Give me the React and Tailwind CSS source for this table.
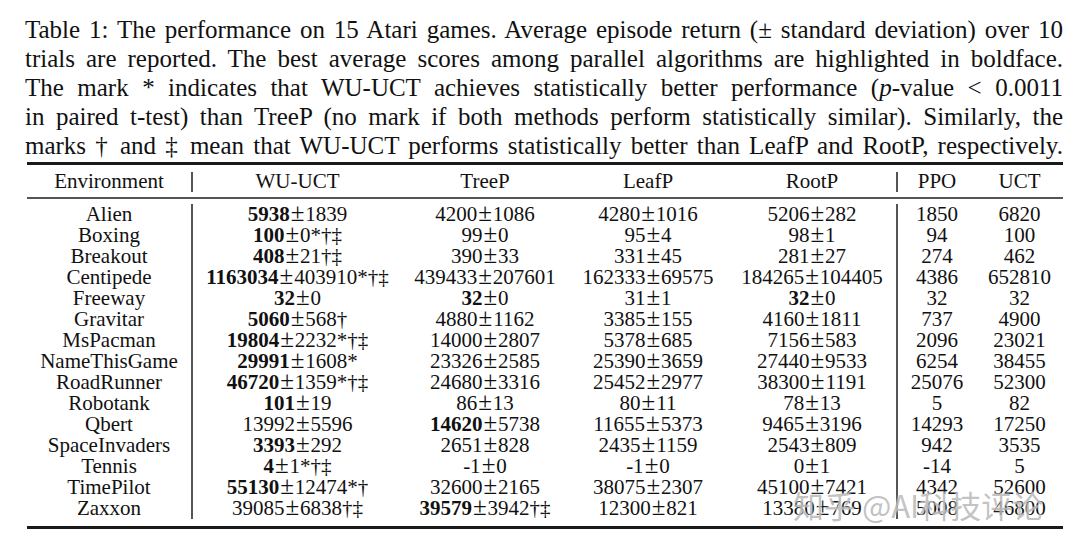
import React from "react";

const rows = [
  ["Alien", [["5938", "±1839"], ["", "4200±1086"], ["", "4280±1016"], ["", "5206±282"]], "1850", "6820"],
  ["Boxing", [["100", "±0*†‡"], ["", "99±0"], ["", "95±4"], ["", "98±1"]], "94", "100"],
  ["Breakout", [["408", "±21†‡"], ["", "390±33"], ["", "331±45"], ["", "281±27"]], "274", "462"],
  ["Centipede", [["1163034", "±403910*†‡"], ["", "439433±207601"], ["", "162333±69575"], ["", "184265±104405"]], "4386", "652810"],
  ["Freeway", [["32", "±0"], ["32", "±0"], ["", "31±1"], ["32", "±0"]], "32", "32"],
  ["Gravitar", [["5060", "±568†"], ["", "4880±1162"], ["", "3385±155"], ["", "4160±1811"]], "737", "4900"],
  ["MsPacman", [["19804", "±2232*†‡"], ["", "14000±2807"], ["", "5378±685"], ["", "7156±583"]], "2096", "23021"],
  ["NameThisGame", [["29991", "±1608*"], ["", "23326±2585"], ["", "25390±3659"], ["", "27440±9533"]], "6254", "38455"],
  ["RoadRunner", [["46720", "±1359*†‡"], ["", "24680±3316"], ["", "25452±2977"], ["", "38300±1191"]], "25076", "52300"],
  ["Robotank", [["101", "±19"], ["", "86±13"], ["", "80±11"], ["", "78±13"]], "5", "82"],
  ["Qbert", [["", "13992±5596"], ["14620", "±5738"], ["", "11655±5373"], ["", "9465±3196"]], "14293", "17250"],
  ["SpaceInvaders", [["3393", "±292"], ["", "2651±828"], ["", "2435±1159"], ["", "2543±809"]], "942", "3535"],
  ["Tennis", [["4", "±1*†‡"], ["", "-1±0"], ["", "-1±0"], ["", "0±1"]], "-14", "5"],
  ["TimePilot", [["55130", "±12474*†"], ["", "32600±2165"], ["", "38075±2307"], ["", "45100±7421"]], "4342", "52600"],
  ["Zaxxon", [["", "39085±6838†‡"], ["39579", "±3942†‡"], ["", "12300±821"], ["", "13380±769"]], "5008", "46800"],
];

function Pm() {
  return <span className="text-[25px] leading-[0] mx-[1px]">±</span>;
}

function Val({ bold, rest }) {
  const [a, b] = rest.split("±");
  return (
    <span>
      {bold && <b className="font-bold">{bold}</b>}
      {a}
      <Pm />
      {b}
    </span>
  );
}

const gridCols =
  "grid grid-cols-[164px_2px_209px_166px_160px_168px_2px_78px_87px]";

export default function App() {
  return (
    <div className="relative w-[1080px] h-[549px] overflow-hidden bg-white text-[#111] font-['Liberation_Serif',serif]">
      <div className="ml-[25px] w-[1038px] pt-[15px] text-[25px] leading-[29px]">
        <div className="text-justify [text-align-last:justify]">
          Table 1: The performance on 15 Atari games. Average episode return (± standard deviation) over 10
        </div>
        <div className="text-justify [text-align-last:justify]">
          trials are reported. The best average scores among parallel algorithms are highlighted in boldface.
        </div>
        <div className="text-justify [text-align-last:justify]">
          The mark * indicates that WU-UCT achieves statistically better performance (<i>p</i>-value &lt; 0.0011
        </div>
        <div className="text-justify [text-align-last:justify]">
          in paired t-test) than TreeP (no mark if both methods perform statistically similar). Similarly, the
        </div>
        <div className="text-justify [text-align-last:justify]">
          marks † and ‡ mean that WU-UCT performs statistically better than LeafP and RootP, respectively.
        </div>
      </div>

      <div className="ml-[27px] w-[1036px] mt-[2px] text-[21px] leading-[21px]">
        <div className="h-[3px] bg-[#1a1a1a]" />
        <div className={`${gridCols} h-[32px] items-center text-center`}>
          <div>Environment</div>
          <div className="h-[20px] w-[2px] bg-[#555] mt-[2px]" />
          <div>WU-UCT</div>
          <div>TreeP</div>
          <div>LeafP</div>
          <div>RootP</div>
          <div className="h-[20px] w-[2px] bg-[#555] mt-[2px]" />
          <div>PPO</div>
          <div>UCT</div>
        </div>
        <div className="h-[2px] bg-[#555]" />
        <div className={`${gridCols} grid-rows-[repeat(15,21px)] mt-[5px] mb-[7px] text-center`}>
          <div className="col-start-2 row-start-1 row-end-16 w-[2px] bg-[#555]" />
          <div className="col-start-7 row-start-1 row-end-16 w-[2px] bg-[#555]" />
          {rows.map(([name, vals, ppo, uct]) => (
            <React.Fragment key={name}>
              <div className="whitespace-nowrap">{name}</div>
              {vals.map(([b, r], i) => (
                <div key={i} className="whitespace-nowrap">
                  <Val bold={b} rest={r} />
                </div>
              ))}
              <div>{ppo}</div>
              <div>{uct}</div>
            </React.Fragment>
          ))}
        </div>
        <div className="h-[3px] bg-[#1a1a1a]" />
      </div>

      <div className="absolute left-[793px] top-[488px] text-[31px] leading-[34px] whitespace-nowrap text-[#9a9a9a]/60 font-['Noto_Sans_CJK_SC',sans-serif] [text-shadow:0_0_2px_rgba(255,255,255,0.9)]">
        知乎 @AI科技评论
      </div>
    </div>
  );
}
